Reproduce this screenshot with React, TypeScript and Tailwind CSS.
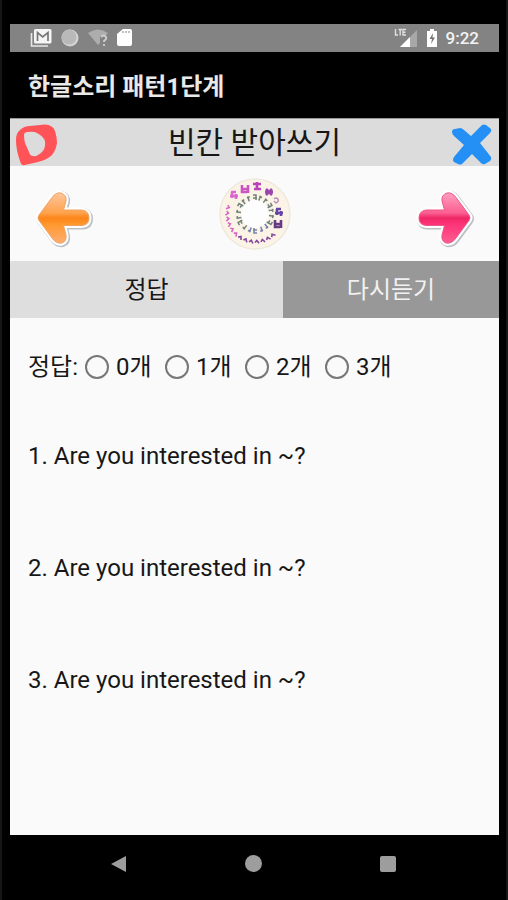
import React from 'react';

const choices = ['0개', '1개', '2개', '3개'];
const questions = [
  '1. Are you interested in ~?',
  '2. Are you interested in ~?',
  '3. Are you interested in ~?',
];

const LEFT_ARROW =
  'M3 33.500Q1 31 3 28L16 10.500Q20 5 25 6Q31 8 30 14L27.500 23H46Q53 24 53 31Q53 38 46 38.500H27.500L30 48Q31 54 26 56Q20 57 16 51Z';

function StatusBar() {
  return (
    <div className="flex h-7 items-center justify-between bg-[#838383] pr-5 pl-5">
      <div className="flex items-center gap-2">
        <svg width="22" height="20" viewBox="0 0 22 20" aria-hidden="true">
          <path d="M1.5 5V18H18" fill="none" stroke="#e8e8e8" strokeWidth="1.6" />
          <rect x="4" y="1" width="17.500" height="14.500" rx="1.500" fill="#f5f5f5" />
          <path d="M7.500 13V4.500L12.700 9L18 4.500V13" fill="none" stroke="#777" strokeWidth="1.700" />
        </svg>
        <svg width="20" height="20" viewBox="0 0 20 20" aria-hidden="true">
          <circle cx="10" cy="10" r="8.500" fill="#d4d4d4" />
          <circle cx="9" cy="9" r="7.500" fill="#b9b9b9" />
        </svg>
        <svg width="20" height="20" viewBox="0 0 20 20" aria-hidden="true">
          <path d="M0 5Q10 -2 20 5L17 8H12V15L10 17Z" fill="#adadad" />
          <path d="M13 9Q16 6 18 9Q19 11 16 13V14M16 16V18" fill="none" stroke="#d0d0d0" strokeWidth="1.800" />
        </svg>
        <svg width="18" height="20" viewBox="0 0 18 20" aria-hidden="true">
          <path d="M7 1H14Q16 1 16 3V16Q16 18 14 18H3Q1 18 1 16V6Z" fill="#fff" />
          <path d="M7 3V5M10 3V5M13 3V5" stroke="#999" strokeWidth="1.200" />
        </svg>
      </div>
      <div className="flex items-center gap-2">
        <svg width="24" height="20" viewBox="0 0 24 20" aria-hidden="true">
          <path d="M23 2V19H6Z" fill="#a8a8a8" />
          <path d="M16 9V19H6Z" fill="#fff" />
          <path d="M1.500 1V7H4M4.500 1.500H8M6.200 1.500V7.500M12 1.500H9V7H12M9 4.200H11.500" fill="none" stroke="#e0e0e0" strokeWidth="1.400" />
        </svg>
        <svg width="12" height="20" viewBox="0 0 12 20" aria-hidden="true">
          <path d="M4 1H8V3H11V19H1V3H4Z" fill="#fff" />
          <path d="M7 5L3.500 11H6L5 16L9 9.500H6.500Z" fill="#777" />
        </svg>
        <span className="text-[17px] leading-5 font-medium text-[#f4f4f4]">9:22</span>
      </div>
    </div>
  );
}

function Arrow({ direction }: { direction: 'left' | 'right' }) {
  const left = direction === 'left';
  const id = `arrow-${direction}`;
  return (
    <svg width="56" height="62" viewBox="0 0 56 62" className="overflow-visible" aria-hidden="true">
      <defs>
        <linearGradient id={id} x1="0" y1="0" x2="0" y2="1">
          <stop offset="0" stopColor={left ? '#ffc69b' : '#ff9fc0'} />
          <stop offset=".4" stopColor={left ? '#ffa24c' : '#fb5f91'} />
          <stop offset=".5" stopColor={left ? '#fb8519' : '#ef2666'} />
          <stop offset=".65" stopColor={left ? '#ff9b32' : '#ff377b'} />
          <stop offset="1" stopColor={left ? '#ffad72' : '#fb5e91'} />
        </linearGradient>
      </defs>
      <g transform={left ? undefined : 'translate(55 0) scale(-1 1)'}>
        <path
          d={LEFT_ARROW}
          transform={left ? 'translate(1 1)' : 'translate(-1 1)'}
          fill="#b5bbc2"
          stroke="#bcc0c5"
          strokeWidth="6"
          strokeLinejoin="round"
        />
        <path d={LEFT_ARROW} fill="#fff" stroke="#fff" strokeWidth="5" strokeLinejoin="round" />
        <path d={LEFT_ARROW} fill={`url(#${id})`} stroke={left ? '#f0a262' : '#ee5787'} strokeWidth="1" />
      </g>
    </svg>
  );
}

function Disc() {
  const glyphs = ['M-3-3H2M-2-3V3M2-1V4M-4 1H4', 'M-3-4V3H2M3-4V4M-2 0H4', 'M-4-2H4M0-4V4M-3 3H4', 'M-3-3L3 3M3-3L-3 3M-4 0H4'];
  const big = [
    [-21, -19, '#dc65cf'], [-10, -25, '#cc55c4'], [2, -28, '#b843bb'], [14, -22, '#9c45ae'], [24, -2, '#6545a5'], [23, 10, '#663a84'],
  ] as const;
  return (
    <svg width="74" height="74" viewBox="-37 -37 74 74" aria-hidden="true">
      <circle r="35" fill="#fbf4e6" stroke="#efe9dd" strokeWidth="1.500" />
      <circle r="14" fill="#fdfdfd" />
      {big.map(([x, y, color], i) => (
        <path key={x} d={glyphs[i % 4]} transform={`translate(${x} ${y})`} fill="none" stroke={color} strokeWidth="2.600" />
      ))}
      <path d="M-2-2Q0-4 2-2Q3 1 0 2L-2 0" transform="translate(21 -13)" fill="none" stroke="#b78fbc" strokeWidth="1.500" />
      {Array.from({ length: 13 }, (_, i) => (
        <path
          key={i}
          d="M-2-1.500L0 1.500L2-.500"
          transform={`rotate(${140 + i * 12}) translate(0 -28)`}
          fill="none"
          stroke={i < 7 ? '#86469d' : '#d26ac5'}
          strokeWidth="1.600"
        />
      ))}
      {Array.from({ length: 18 }, (_, i) => (
        <path
          key={i}
          d={i % 3 ? 'M-1-2V3M1-1H-2' : 'M-2-2H1V3M-2 1H2'}
          transform={`rotate(${i * 20}) translate(0 -17)`}
          fill="none"
          stroke={i > 6 && i < 11 ? '#7581ae' : '#71817c'}
          strokeWidth="1.500"
        />
      ))}
    </svg>
  );
}

export default function App() {
  return (
    <div className="flex min-h-screen flex-col border-x-2 border-[#161616] bg-black pt-6 pr-[7px] pl-2 font-[Roboto,'Noto_Sans_CJK_KR',sans-serif] text-[#171717]">
      <StatusBar />
      <header className="flex h-[66px] items-center px-[18px] pt-1">
        <h1 className="text-2xl leading-8 font-bold text-[#e9e9e9]">한글소리 패턴1단계</h1>
      </header>

      <main className="flex grow flex-col bg-[#fafafa]">
        <div className="flex h-12 items-center justify-between border-t border-[#999] bg-[#dcdcdc] px-[5px]">
          <button type="button" aria-label="D" className="pt-1">
            <svg width="44" height="42" viewBox="0 0 44 42" aria-hidden="true">
              <path
                fillRule="evenodd"
                fill="#ff5358"
                d="M1 16Q1 9 5 6Q9 2 15 2L30 .5Q38 1 40 7Q42 13 42 19Q41 26 37 31Q32 36 23 38L10 41Q6 42 5 37Q1 26 1 16ZM9 11Q9 8 13 8Q19 7 22 9Q28 12 30 17Q31 24 27 28Q22 33 18 32Q15 32 14 28L10 19Q9 15 9 11Z"
              />
            </svg>
          </button>
          <h2 className="text-[30px] leading-10">빈칸 받아쓰기</h2>
          <button type="button" aria-label="X" className="pt-1">
            <svg width="44" height="42" viewBox="0 0 44 42" aria-hidden="true">
              <path
                fill="#2490f5"
                d="M2 8Q2 5 5 5L10 4Q12 4 14 6L21 12L32 1Q34 0 36 1L41 5Q42 7 40 9L30 19L41 33Q42 35 40 37L35 40Q33 41 31 39L22 30L12 40Q10 41 8 40L4 38Q2 36 4 33L14 21L4 12Q2 10 2 8Z"
              />
            </svg>
          </button>
        </div>

        <nav className="flex h-[95px] items-center justify-between px-[26px]">
          <button type="button" aria-label="이전" className="pt-2"><Arrow direction="left" /></button>
          <Disc />
          <button type="button" aria-label="다음" className="pt-2"><Arrow direction="right" /></button>
        </nav>

        <div className="grid h-[57px] grid-cols-[273fr_216fr] text-2xl">
          <button type="button" className="bg-[#dedede]">정답</button>
          <button type="button" className="bg-[#989898] text-[#f1f1f1]">다시듣기</button>
        </div>

        <div role="radiogroup" aria-labelledby="correct-label" className="flex h-[98px] items-center px-[18px] text-2xl">
          <span id="correct-label" className="w-[57px]">정답:</span>
          <div className="flex">
            {choices.map((choice) => (
              <label key={choice} className="flex w-20 items-center gap-[7px]">
                <input
                  type="radio"
                  name="correct"
                  className="size-6 shrink-0 appearance-none rounded-full border-2 border-[#777] checked:border-[#333] checked:bg-[#777]"
                />
                <span>{choice}</span>
              </label>
            ))}
          </div>
        </div>

        <ol className="flex flex-col gap-20 px-[18px] pt-6 pb-16 text-2xl">
          {questions.map((question) => (
            <li key={question}>{question}</li>
          ))}
        </ol>
      </main>

      <nav className="flex h-[65px] items-center justify-center gap-[118px] pr-[3px] pb-2">
        <button type="button" aria-label="뒤로">
          <svg width="17" height="18" viewBox="0 0 17 18" aria-hidden="true"><path d="M1 9L16 1V17Z" fill="#9d9d9d" /></svg>
        </button>
        <button type="button" aria-label="홈" className="size-[17px] rounded-full bg-[#9d9d9d]" />
        <button type="button" aria-label="최근" className="size-4 rounded-xs bg-[#9d9d9d]" />
      </nav>
    </div>
  );
}
